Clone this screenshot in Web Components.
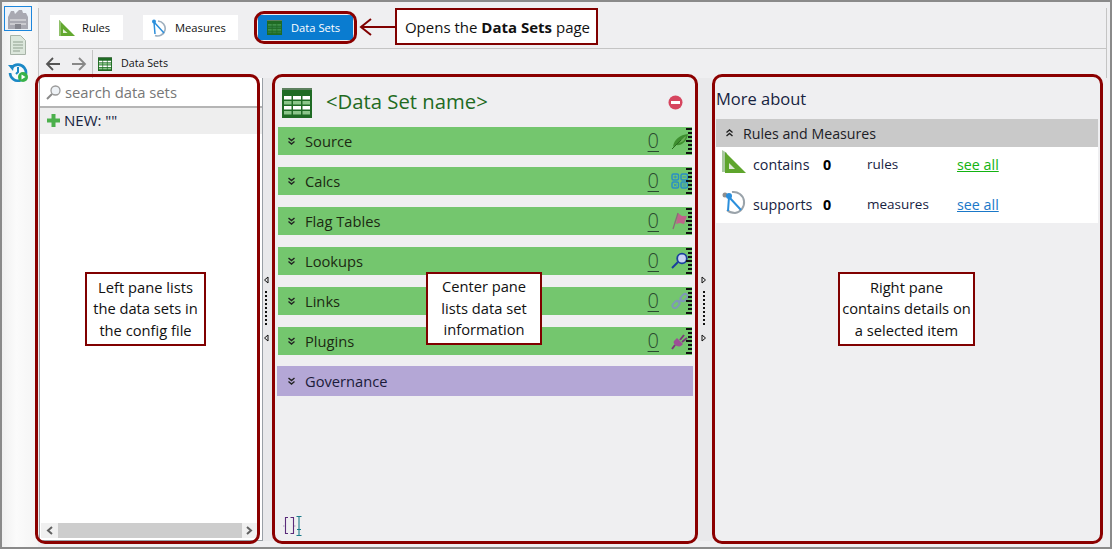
<!DOCTYPE html>
<html lang="en">
<head>
<meta charset="utf-8">
<title>Data Sets</title>
<style>
  html, body { margin: 0; padding: 0; }
  body { font-family: "Open Sans", "Noto Sans", sans-serif; }
  note-box.left { left: 85px; top: 272px; width: 121px; height: 74px; }
  note-box.center { left: 426px; top: 272px; width: 116px; height: 73px; }
  note-box.right { left: 838px; top: 272px; width: 137px; height: 74px; }
  note-box.opens { left: 395px; top: 8px; width: 203px; height: 36.500px; font-size: 15px; padding: 3px 0 0 2px; }
  pane-ring.left { left: 34.500px; top: 74px; width: 225px; height: 470px; }
  pane-ring.center { left: 272px; top: 74px; width: 426px; height: 470px; }
  pane-ring.right { left: 712px; top: 74px; width: 391px; height: 470px; }
  pane-ring.tab { left: 254px; top: 11px; width: 103px; height: 32.500px; }
</style>
</head>
<body>
<app-shell>
  <nav-rail slot="rail"></nav-rail>

  <tab-button slot="tabs" style="width:73px">
    <svg slot="icon" width="18" height="18" viewBox="0 0 18 18"><path d="M0 1v16h16z" fill="#62a82f"/><path d="M0 1v16h2V3z" fill="#8fc06a"/><path d="M4 10v4h4.500z" fill="#e4f0d8"/></svg>
    Rules
  </tab-button>
  <tab-button slot="tabs" style="width:95px;margin-left:20px">
    <svg slot="icon" width="18" height="18" viewBox="0 0 18 18"><path d="M6 2a7.500 7.500 0 1 1-3 14.500" fill="none" stroke="#9fb0bf" stroke-width="1.600"/><path d="M2 3l10 11M2 3l1 12" stroke="#2b8fdc" stroke-width="1.500" fill="none"/><circle cx="2" cy="2.500" r="2" fill="#2b8fdc"/></svg>
    Measures
  </tab-button>
  <tab-button slot="tabs" active style="width:95px;margin-left:20px;gap:9px;--cell:#3f9048;--cell2:#2f7c3f">
    <grid-icon slot="icon" size="15"></grid-icon>
    Data Sets
  </tab-button>

  <crumb-bar slot="crumbs">Data Sets</crumb-bar>

  <list-pane slot="left"></list-pane>
  <pane-splitter slot="split-a" dir="left"></pane-splitter>

  <detail-pane slot="center">
    <accordion-row count="0">Source
      <svg slot="icon" width="18" height="16" viewBox="0 0 18 16"><path d="M2 14C3 6 9 2 17 1c-1 8-7 12-12 11z" fill="#3e8e2f"/><path d="M8 10C10 7 12 5 15 3c-1 4-3 6-7 7z" fill="#6cb35a"/><path d="M1 16L10 7" stroke="#2a6a20" fill="none"/></svg>
    </accordion-row>
    <accordion-row count="0">Calcs
      <svg slot="icon" width="18" height="16" viewBox="0 0 18 16" fill="none" stroke="#2a8fc6" stroke-width="1.500"><rect x="1" y="1" width="6.500" height="6" rx="1.500"/><rect x="10" y="1" width="6.500" height="6" rx="1.500"/><rect x="1" y="9" width="6.500" height="6" rx="1.500"/><rect x="10" y="9" width="6.500" height="6" rx="1.500"/><path d="M2.500 4h3.500M4.200 2.500v3M11.500 4h3.500M2.800 10.800l3 2.500M5.800 10.800l-3 2.500M11.500 11h3.500M11.500 13h3.500" stroke-width="1"/></svg>
    </accordion-row>
    <accordion-row count="0">Flag Tables
      <svg slot="icon" width="18" height="18" viewBox="0 0 18 18"><path d="M7 1l1 1 3 2 5 0-3 8-4-1-4 1z" fill="#c0638a"/><path d="M7 1L2 17" stroke="#8a6a78" stroke-width="1.300"/></svg>
    </accordion-row>
    <accordion-row count="0">Lookups
      <svg slot="icon" width="18" height="18" viewBox="0 0 18 18"><circle cx="11" cy="6.500" r="4.800" fill="#c9d4f2" stroke="#1b3f9e" stroke-width="1.800"/><path d="M7 10l-6 6" stroke="#1b3f9e" stroke-width="2"/></svg>
    </accordion-row>
    <accordion-row count="0">Links
      <svg slot="icon" width="18" height="18" viewBox="0 0 18 18" fill="none" stroke="#7f97ba" stroke-width="1.800"><rect x="1" y="10" width="8" height="5" rx="2.500" transform="rotate(-45 5 12.500)"/><rect x="9" y="3" width="8" height="5" rx="2.500" transform="rotate(-45 13 5.500)"/><path d="M7 11l4-4"/></svg>
    </accordion-row>
    <accordion-row count="0">Plugins
      <svg slot="icon" width="18" height="18" viewBox="0 0 18 18"><path d="M6 6l6 6-2 2c-2 1-5 0-6-1s-2-3-1-4z" fill="#9c4f96"/><path d="M9 8l4-5M11 10l5-4" stroke="#7a3a78" stroke-width="2"/><path d="M4 13l-3 4" stroke="#7a3a78" stroke-width="2"/></svg>
    </accordion-row>
    <accordion-row purple>Governance</accordion-row>
  </detail-pane>

  <pane-splitter slot="split-b" dir="right"></pane-splitter>

  <about-pane slot="right">
    <about-row count="0" noun="rules" link="#12b312">contains
      <svg slot="icon" width="26" height="26" viewBox="0 0 26 26"><path d="M1 1v22h5V4z" fill="#a9c8a0"/><path d="M4 3v21h21z" fill="#5ea52c"/><path d="M8 14v6h6z" fill="#dfe9d8"/></svg>
    </about-row>
    <about-row count="0" noun="measures" link="#1a78c8">supports
      <svg slot="icon" width="26" height="26" viewBox="0 0 26 26"><path d="M11 3a10.500 10.500 0 0 1 3 21c-3 0-6-1-8-3" fill="none" stroke="#9aa3aa" stroke-width="2"/><path d="M8 8l12 13M8 8l-1 14" stroke="#2b8fdc" stroke-width="2" fill="none"/><circle cx="4" cy="6" r="2.500" fill="#8f8f8f"/><circle cx="8" cy="7" r="3" fill="#2b8fdc"/></svg>
    </about-row>
  </about-pane>

  <pane-ring slot="over" class="left"></pane-ring>
  <pane-ring slot="over" class="center"></pane-ring>
  <pane-ring slot="over" class="right"></pane-ring>
  <pane-ring slot="over" class="tab"></pane-ring>
  <note-box slot="over" class="left">Left pane lists<br>the data sets in<br>the config file</note-box>
  <note-box slot="over" class="center">Center pane<br>lists data set<br>information</note-box>
  <note-box slot="over" class="right">Right pane<br>contains details on<br>a selected item</note-box>
  <note-box slot="over" class="opens">Opens the&nbsp;<b>Data Sets</b>&nbsp;page</note-box>
  <svg slot="over" style="position:absolute;left:358px;top:17px" width="40" height="20" viewBox="0 0 40 20" fill="none" stroke="#800000" stroke-width="2"><path d="M38 10H3M13 2L3 10l10 8"/></svg>
</app-shell>

<script>
const shared = `
  svg { display: block; flex: none; }
`;

const shellTemplate = document.createElement('template');
shellTemplate.innerHTML = `
  <style>
    :host {
      display: grid;
      grid-template-columns: 36px 1fr;
      width: 1112px;
      height: 549px;
      box-sizing: border-box;
      border: 2px solid #8a8a8a;
      background: #efeff1;
      position: relative;
      overflow: hidden;
    }
    .rail { background: linear-gradient(90deg, #f0f0f0, #fbfbfb 40%, #f4f4f4); }
    .main { display: flex; flex-direction: column; min-width: 0; min-height: 0; padding-top: 6px; }
    .top {
      height: 41px;
      flex: none;
      margin-right: 3px;
      border-left: 1px solid #c4c4c4;
      border-right: 1px solid #c4c4c4;
      border-bottom: 1px solid #c4c4c4;
      display: flex;
      align-items: flex-start;
      padding: 7px 0 0 11px;
      box-sizing: border-box;
    }
    .crumbs {
      height: 29px;
      flex: none;
      margin-right: 3px;
      border-left: 1px solid #c4c4c4;
      border-right: 1px solid #c4c4c4;
      box-sizing: border-box;
    }
    .panes { flex: 1; display: flex; min-height: 0; padding-left: 1px; padding-bottom: 6px; }
    .over { position: absolute; left: -2px; top: -2px; width: 0; height: 0; }
  </style>
  <div class="rail"><slot name="rail"></slot></div>
  <div class="main">
    <div class="top"><slot name="tabs"></slot></div>
    <div class="crumbs"><slot name="crumbs"></slot></div>
    <div class="panes">
      <slot name="left"></slot>
      <slot name="split-a"></slot>
      <slot name="center"></slot>
      <slot name="split-b"></slot>
      <slot name="right"></slot>
    </div>
  </div>
  <div class="over"><slot name="over"></slot></div>
`;

class AppShell extends HTMLElement {
  constructor() {
    super();
    this.attachShadow({ mode: 'open' }).appendChild(shellTemplate.content.cloneNode(true));
  }
}

const railTemplate = document.createElement('template');
railTemplate.innerHTML = `
  <style>
    :host { display: flex; flex-direction: column; align-items: center; padding: 4px 0 0 0; width: 32px; }
    .btn { width: 28px; height: 25px; box-sizing: border-box; display: flex; align-items: center; justify-content: center; }
    .on { border: 1px solid #1c86dc; background: #eef3f9; }
    .btn + .btn { margin-top: 1px; height: 26px; }
    ${shared}
  </style>
  <div class="btn on">
    <svg width="22" height="20" viewBox="0 0 22 20"><path d="M1 20V8l3-6h3l1 3 4-4 3 0 1 3h3l2 4v12z" fill="#a9a9b2"/><path d="M3 10h16v2H3zM3 14h16v2H3z" fill="#cbcbd0"/><rect x="8" y="15" width="6" height="5" fill="#85858e"/></svg>
  </div>
  <div class="btn">
    <svg width="16" height="20" viewBox="0 0 16 20"><path d="M.5.500h10l5 5v14H.5z" fill="#dce7dc" stroke="#a8b4a8"/><path d="M3 7h10M3 10h10M3 13h10M3 16h7" stroke="#8fa08f"/></svg>
  </div>
  <div class="btn">
    <svg width="20" height="20" viewBox="0 0 20 20"><path d="M3.500 6A8 8 0 1 1 2 11" fill="none" stroke="#1c89c6" stroke-width="2.600"/><path d="M0 3l6 0-1 6z" fill="#1c89c6"/><path d="M10 5v5l-2 2" fill="none" stroke="#1c89c6" stroke-width="2"/><circle cx="15" cy="15" r="5" fill="#37b24a"/><path d="M13.500 12.500l4 2.500-4 2.500z" fill="#fff"/></svg>
  </div>
`;

class NavRail extends HTMLElement {
  constructor() {
    super();
    this.attachShadow({ mode: 'open' }).appendChild(railTemplate.content.cloneNode(true));
  }
}

const gridTemplate = document.createElement('template');
gridTemplate.innerHTML = `
  <style>
    :host { display: block; flex: none; line-height: 0; }
    .a { fill: var(--cell, #fff); }
    .b { fill: var(--cell2, #8cc68a); }
    ${shared}
  </style>
  <svg viewBox="0 0 30 30" width="100%" height="100%">
    <rect width="30" height="30" fill="#1f6b24"/>
    <rect y="0" width="30" height="2" fill="#5c7f5e"/>
    <g class="a">
      <rect x="2" y="8" width="7.500" height="3.500"/><rect x="11" y="8" width="8" height="3.500"/><rect x="20.500" y="8" width="7.500" height="3.500"/>
      <rect x="2" y="18" width="7.500" height="3.500"/><rect x="11" y="18" width="8" height="3.500"/><rect x="20.500" y="18" width="7.500" height="3.500"/>
    </g>
    <g class="b">
      <rect x="2" y="13" width="7.500" height="3.500"/><rect x="11" y="13" width="8" height="3.500"/><rect x="20.500" y="13" width="7.500" height="3.500"/>
      <rect x="2" y="23" width="7.500" height="3.500"/><rect x="11" y="23" width="8" height="3.500"/><rect x="20.500" y="23" width="7.500" height="3.500"/>
    </g>
  </svg>
`;

class GridIcon extends HTMLElement {
  constructor() {
    super();
    this.attachShadow({ mode: 'open' }).appendChild(gridTemplate.content.cloneNode(true));
  }
  connectedCallback() {
    const size = this.getAttribute('size') || 15;
    this.style.width = size + 'px';
    this.style.height = size + 'px';
  }
}

const tabTemplate = document.createElement('template');
tabTemplate.innerHTML = `
  <style>
    :host {
      display: inline-flex;
      align-items: center;
      height: 25px;
      box-sizing: border-box;
      padding-left: 9px;
      gap: 5px;
      background: #fff;
      color: #111;
      font-size: 11.200px;
      vertical-align: top;
    }
    :host([active]) { background: #0a7cd0; color: #fff; }
    ${shared}
  </style>
  <slot name="icon"></slot><span><slot></slot></span>
`;

class TabButton extends HTMLElement {
  constructor() {
    super();
    this.attachShadow({ mode: 'open' }).appendChild(tabTemplate.content.cloneNode(true));
  }
}

const crumbTemplate = document.createElement('template');
crumbTemplate.innerHTML = `
  <style>
    :host { display: flex; align-items: center; height: 100%; padding-left: 6px; font-size: 10.700px; color: #111; }
    .sep { width: 1px; height: 28px; background: #c4c4c4; margin: 0 5px 0 5px; }
    .fwd { margin-left: 12px; }
    span { margin: 0 0 2px 9px; }
    ${shared}
  </style>
  <svg width="15" height="14" viewBox="0 0 15 14" fill="none" stroke="#555" stroke-width="1.800"><path d="M15 7H2M8 1L2 7l6 6"/></svg>
  <svg class="fwd" width="15" height="14" viewBox="0 0 15 14" fill="none" stroke="#888" stroke-width="1.800"><path d="M0 7h13M7 1l6 6-6 6"/></svg>
  <div class="sep"></div>
  <grid-icon size="14"></grid-icon>
  <span><slot></slot></span>
`;

class CrumbBar extends HTMLElement {
  constructor() {
    super();
    this.attachShadow({ mode: 'open' }).appendChild(crumbTemplate.content.cloneNode(true));
  }
}

const listTemplate = document.createElement('template');
listTemplate.innerHTML = `
  <style>
    :host {
      display: flex;
      flex-direction: column;
      width: 224px;
      height: 100%;
      box-sizing: border-box;
      background: #fff;
      border-right: 1px solid #9aa0a6;
      border-bottom: 1px solid #9aa0a6;
      border-left: 1px solid #9aa0a6;
    }
    .search {
      height: 30px;
      box-sizing: border-box;
      display: flex;
      align-items: center;
      gap: 4px;
      padding-left: 6px;
      font-size: 14.800px;
      color: #777;
      border-bottom: 2px solid #b5b5b5;
      flex: none;
    }
    .new {
      height: 26px;
      flex: none;
      box-sizing: border-box;
      background: #eeeeee;
      display: flex;
      align-items: center;
      gap: 3px;
      padding: 0 0 2px 6px;
      font-size: 15px;
      color: #17233f;
    }
    .fill { flex: 1; }
    .bar {
      flex: none;
      height: 15px;
      margin: 0 5px 2px 1px;
      background: #f0f0f0;
      display: flex;
      align-items: center;
      justify-content: space-between;
    }
    .thumb { width: 184px; height: 15px; background: #cdcdcd; }
    ${shared}
  </style>
  <div class="search">
    <svg width="15" height="15" viewBox="0 0 15 15"><circle cx="9.500" cy="5.500" r="4.500" fill="#eef2f6" stroke="#9a9a9a" stroke-width="1.300"/><path d="M6 9l-5 5" stroke="#8a8a8a" stroke-width="2"/></svg>
    search data sets
  </div>
  <div class="new">
    <svg width="15" height="15" viewBox="0 0 15 15"><path d="M5.500 1h4v4.500H14v4H9.500V14h-4V9.500H1v-4h4.500z" fill="#4cb04c"/></svg>
    NEW: ""
  </div>
  <div class="fill"></div>
  <div class="bar">
    <svg style="margin-left:5px" width="7" height="9" viewBox="0 0 7 9" fill="none" stroke="#606060" stroke-width="2"><path d="M6 1L2 4.500 6 8"/></svg>
    <div class="thumb"></div>
    <svg style="margin-right:4px" width="7" height="9" viewBox="0 0 7 9" fill="none" stroke="#606060" stroke-width="2"><path d="M1 1l4 3.500L1 8"/></svg>
  </div>
`;

class ListPane extends HTMLElement {
  constructor() {
    super();
    this.attachShadow({ mode: 'open' }).appendChild(listTemplate.content.cloneNode(true));
  }
}

const splitTemplate = document.createElement('template');
splitTemplate.innerHTML = `
  <style>
    :host {
      display: flex;
      flex-direction: column;
      justify-content: center;
      height: 100%;
      flex: none;
      background: #e9e9eb;
      box-sizing: border-box;
      padding-bottom: 1px;
    }
    .dots { width: 2px; height: 34px; margin: 7px 0 9px 2px; background: repeating-linear-gradient(#111 0 2px, transparent 2px 4px); }
    ${shared}
  </style>
  <svg width="6" height="8" viewBox="0 0 6 8" fill="none" stroke="#111"><path class="p"/></svg>
  <div class="dots"></div>
  <svg width="6" height="8" viewBox="0 0 6 8" fill="none" stroke="#111"><path class="p"/></svg>
`;

class PaneSplitter extends HTMLElement {
  constructor() {
    super();
    this.attachShadow({ mode: 'open' }).appendChild(splitTemplate.content.cloneNode(true));
  }
  connectedCallback() {
    const right = this.getAttribute('dir') === 'right';
    this.style.width = right ? '14px' : '10px';
    this.style.paddingLeft = right ? '3px' : '0';
    this.shadowRoot.querySelectorAll('.p').forEach((p) => {
      p.setAttribute('d', right ? 'M1 1l3.500 3L1 7z' : 'M5 1L1.500 4 5 7z');
    });
  }
}

const detailTemplate = document.createElement('template');
detailTemplate.innerHTML = `
  <style>
    :host {
      display: flex;
      flex-direction: column;
      flex: none;
      width: 425px;
      height: 100%;
      box-sizing: border-box;
      background: #efeff1;
      padding: 0 6px 0 5px;
    }
    .head { height: 49px; flex: none; display: flex; align-items: center; padding-left: 4px; }
    .name { margin: 0 0 4px 14px; font-size: 20.300px; color: #1f6b1f; }
    .stop { margin-left: auto; margin-right: 9px; }
    .rows { display: flex; flex-direction: column; gap: 12px; }
    .foot { margin-top: auto; padding: 0 0 5px 5px; }
    ${shared}
  </style>
  <div class="head">
    <grid-icon size="30"></grid-icon>
    <span class="name">&lt;Data Set name&gt;</span>
    <svg class="stop" width="15" height="15" viewBox="0 0 15 15"><circle cx="7.500" cy="7.500" r="7" fill="#d6455f"/><rect x="3" y="6" width="9" height="3" fill="#fff"/></svg>
  </div>
  <div class="rows"><slot></slot></div>
  <div class="foot">
    <svg width="20" height="20" viewBox="0 0 20 20" fill="none"><path d="M5 1.500H2.500v16H5M7.500 1.500h3v16h-3" stroke="#5a2a7a" stroke-width="1.100"/><path d="M0 10h1.500M11 10h1.500" stroke="#a79ab5"/><path d="M13.500.500h5M16 .500v19M13.500 19.500h5M14 13.500h4" stroke="#1b7a8a" stroke-width="1.100"/></svg>
  </div>
`;

class DetailPane extends HTMLElement {
  constructor() {
    super();
    this.attachShadow({ mode: 'open' }).appendChild(detailTemplate.content.cloneNode(true));
  }
}

const rowTemplate = document.createElement('template');
rowTemplate.innerHTML = `
  <style>
    :host {
      display: flex;
      align-items: center;
      height: 28px;
      box-sizing: border-box;
      background: #74c66e;
      color: #1c2a12;
      font-size: 14.700px;
    }
    :host([purple]) { background: #b4a7d6; height: 30px; margin: -1px -1px 0; color: #1b1b3a; }
    :host([purple]) .chev { margin-left: 11px; }
    .chev { margin: 0 10px 0 10px; }
    .label { flex: 1; }
    .count { font-size: 20px; font-weight: 300; color: #2a4a30; text-decoration: underline; text-underline-offset: 3px; text-decoration-thickness: 1px; margin: 0 12px 2px 0; }
    .icon { width: 18px; height: 20px; display: flex; align-items: center; margin-right: -4px; }
    .ruler { align-self: stretch; position: relative; }
    ${shared}
  </style>
  <svg class="chev" width="7" height="8" viewBox="0 0 7 8" fill="none" stroke="#222" stroke-width="1.400"><path d="M.5 1l3 2.500L6.500 1M.5 4.500l3 2.500 3-2.500"/></svg>
  <span class="label"><slot></slot></span>
  <span class="count"></span>
  <span class="icon"><slot name="icon"></slot></span>
  <svg class="ruler" width="7" height="28" viewBox="0 0 7 28" fill="#111">
    <rect x="1" y="1" width="6" height="2"/><rect x="3" y="5" width="4" height="2"/><rect x="3" y="9" width="4" height="2"/><rect x="1" y="13" width="6" height="2"/><rect x="3" y="17" width="4" height="2"/><rect x="3" y="21" width="4" height="2"/><rect x="1" y="25" width="6" height="2"/>
  </svg>
`;

class AccordionRow extends HTMLElement {
  constructor() {
    super();
    this.attachShadow({ mode: 'open' }).appendChild(rowTemplate.content.cloneNode(true));
  }
  connectedCallback() {
    const root = this.shadowRoot;
    if (this.hasAttribute('purple')) {
      root.querySelector('.count').remove();
      root.querySelector('.icon').remove();
      root.querySelector('.ruler').remove();
    } else {
      root.querySelector('.count').textContent = this.getAttribute('count');
    }
  }
}

const aboutTemplate = document.createElement('template');
aboutTemplate.innerHTML = `
  <style>
    :host {
      display: flex;
      flex-direction: column;
      flex: 1;
      min-width: 0;
      height: 100%;
      box-sizing: border-box;
      padding: 0 12px 0 4px;
      background: #efeff1;
    }
    .title { height: 41px; flex: none; display: flex; align-items: center; font-size: 16.500px; color: #17233f; box-sizing: border-box; }
    .bar { height: 28px; flex: none; background: #c9c9c9; display: flex; align-items: center; gap: 9px; padding-left: 9px; font-size: 14.200px; color: #1c2026; box-sizing: border-box; }
    .rows { background: #fff; height: 76px; display: flex; flex-direction: column; gap: 4px; }
    ${shared}
  </style>
  <div class="title">More about</div>
  <div class="bar">
    <svg width="9" height="8" viewBox="0 0 7 8" fill="none" stroke="#222" stroke-width="1.400"><path d="M.5 7l3-2.500L6.500 7M.5 3.500l3-2.500 3 2.500"/></svg>
    Rules and Measures
  </div>
  <div class="rows"><slot></slot></div>
`;

class AboutPane extends HTMLElement {
  constructor() {
    super();
    this.attachShadow({ mode: 'open' }).appendChild(aboutTemplate.content.cloneNode(true));
  }
}

const aboutRowTemplate = document.createElement('template');
aboutRowTemplate.innerHTML = `
  <style>
    :host {
      display: grid;
      grid-template-columns: 37px 70px 44px 90px auto;
      align-items: center;
      height: 36px;
      box-sizing: border-box;
      padding-bottom: 2px;
      font-size: 14.300px;
      color: #17233f;
    }
    .icon { padding-left: 5px; }
    .noun { font-size: 13.500px; }
    b { color: #000; }
    a { text-decoration: underline; justify-self: start; }
    ${shared}
  </style>
  <span class="icon"><slot name="icon"></slot></span>
  <span><slot></slot></span>
  <b class="n"></b>
  <span class="noun"></span>
  <a class="go">see all</a>
`;

class AboutRow extends HTMLElement {
  constructor() {
    super();
    this.attachShadow({ mode: 'open' }).appendChild(aboutRowTemplate.content.cloneNode(true));
  }
  connectedCallback() {
    const root = this.shadowRoot;
    root.querySelector('.n').textContent = this.getAttribute('count');
    root.querySelector('.noun').textContent = this.getAttribute('noun');
    root.querySelector('.go').style.color = this.getAttribute('link');
  }
}

const ringTemplate = document.createElement('template');
ringTemplate.innerHTML = `
  <style>
    :host {
      position: absolute;
      box-sizing: border-box;
      border: 3px solid #8b0000;
      border-radius: 10px;
      pointer-events: none;
    }
  </style>
`;

class PaneRing extends HTMLElement {
  constructor() {
    super();
    this.attachShadow({ mode: 'open' }).appendChild(ringTemplate.content.cloneNode(true));
  }
}

const noteTemplate = document.createElement('template');
noteTemplate.innerHTML = `
  <style>
    :host {
      position: absolute;
      box-sizing: border-box;
      display: flex;
      align-items: center;
      justify-content: center;
      text-align: center;
      border: 2px solid #800000;
      background: #fff;
      color: #111;
      font-size: 14.700px;
      line-height: 21.500px;
    }
  </style>
  <div><slot></slot></div>
`;

class NoteBox extends HTMLElement {
  constructor() {
    super();
    this.attachShadow({ mode: 'open' }).appendChild(noteTemplate.content.cloneNode(true));
  }
}

customElements.define('grid-icon', GridIcon);
customElements.define('nav-rail', NavRail);
customElements.define('tab-button', TabButton);
customElements.define('crumb-bar', CrumbBar);
customElements.define('list-pane', ListPane);
customElements.define('pane-splitter', PaneSplitter);
customElements.define('accordion-row', AccordionRow);
customElements.define('detail-pane', DetailPane);
customElements.define('about-row', AboutRow);
customElements.define('about-pane', AboutPane);
customElements.define('pane-ring', PaneRing);
customElements.define('note-box', NoteBox);
customElements.define('app-shell', AppShell);
</script>
</body>
</html>
